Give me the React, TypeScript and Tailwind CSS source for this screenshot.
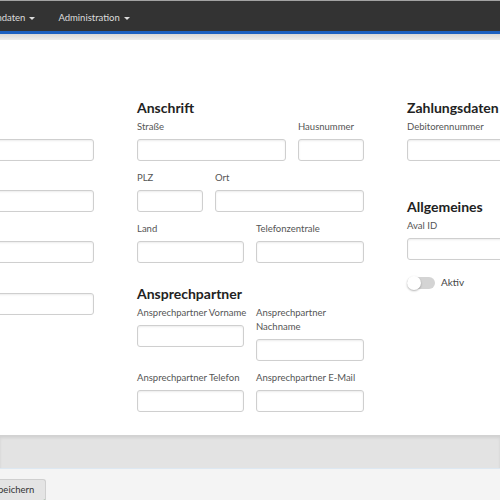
import React from "react";

function Field({ label, w, className = "" }: { label: React.ReactNode; w: string; className?: string }) {
  return (
    <div className={"flex flex-col " + className}>
      <label className="text-[9.5px] leading-[14px] text-[#555] mb-[5px] whitespace-nowrap">{label}</label>
      <input
        className={"h-[22px] rounded-[3px] border border-[#cfcfcf] bg-white shadow-[inset_0_1px_2px_rgba(0,0,0,0.08)] " + w}
      />
    </div>
  );
}

function Heading({ children, className = "" }: { children: React.ReactNode; className?: string }) {
  return <h2 className={"text-[14px] leading-[16px] font-bold text-[#222] mb-[4px] " + className}>{children}</h2>;
}

export default function App() {
  return (
    <div className="w-[500px] h-[500px] overflow-hidden bg-[#f4f4f4] font-['Lato','Liberation_Sans',sans-serif]">
      {/* Top bar */}
      <div className="h-px bg-[#a3a3a3]" />
      <nav className="h-[30px] bg-[#333333] flex items-center pt-[5px] text-[9.5px] text-[#dddddd]">
        <div className="flex items-center gap-[4px] ml-[-27px]">
          <span>Stammdaten</span>
          <span className="border-x-[3px] border-x-transparent border-t-[3px] border-t-[#dddddd]" />
        </div>
        <div className="flex items-center gap-[4px] ml-[23px]">
          <span>Administration</span>
          <span className="border-x-[3px] border-x-transparent border-t-[3px] border-t-[#dddddd]" />
        </div>
      </nav>
      <div className="h-[3px] bg-[#1b5fc0]" />
      <div className="h-[6px] bg-gradient-to-b from-[#d6d6d6] to-[#ededed]" />

      {/* Form card */}
      <main className="h-[395px] bg-white pt-[60px]">
        <div className="flex gap-[43px] ml-[-133px]">
          {/* Column 1 (cut off) */}
          <div className="w-[227px] shrink-0">
            <Heading>Firma</Heading>
            <Field label="Name" w="w-[227px]" className="mb-[10px]" />
            <Field label="Name 2" w="w-[227px]" className="mb-[10px]" />
            <Field label="Kundennummer" w="w-[227px]" className="mb-[11px]" />
            <Field label="Steuernummer" w="w-[227px]" />
          </div>

          {/* Column 2 */}
          <div className="w-[227px] shrink-0">
            <Heading>Anschrift</Heading>
            <div className="flex gap-[12px] mb-[10px]">
              <Field label="Straße" w="w-[149px]" />
              <Field label="Hausnummer" w="w-[66px]" />
            </div>
            <div className="flex gap-[12px] mb-[10px]">
              <Field label="PLZ" w="w-[66px]" />
              <Field label="Ort" w="w-[149px]" />
            </div>
            <div className="flex gap-[12px]">
              <Field label="Land" w="w-[107px]" />
              <Field label="Telefonzentrale" w="w-[108px]" />
            </div>
            <Heading className="mt-[23px]">Ansprechpartner</Heading>
            <div className="flex gap-[12px] items-start mb-[10px]">
              <Field label="Ansprechpartner Vorname" w="w-[107px]" className="w-[107px]" />
              <Field label={<>Ansprechpartner<br />Nachname</>} w="w-[108px]" className="w-[108px]" />
            </div>
            <div className="flex gap-[12px] items-start">
              <Field label="Ansprechpartner Telefon" w="w-[107px]" className="w-[107px]" />
              <Field label="Ansprechpartner E-Mail" w="w-[108px]" className="w-[108px]" />
            </div>
          </div>

          {/* Column 3 */}
          <div className="w-[227px] shrink-0">
            <Heading>Zahlungsdaten</Heading>
            <Field label="Debitorennummer" w="w-[227px]" />
            <Heading className="mt-[38px]">Allgemeines</Heading>
            <Field label="Aval ID" w="w-[227px]" />
            <div className="flex items-center gap-[6px] mt-[15px]">
              <span className="relative w-[28px] h-[12px] rounded-full bg-[#d4d4d4]">
                <span className="absolute left-0 top-[-1px] w-[14px] h-[14px] rounded-full bg-white shadow-[0_1px_2px_rgba(0,0,0,0.3)]" />
              </span>
              <span className="text-[10px] text-[#444]">Aktiv</span>
            </div>
          </div>
        </div>
      </main>

      {/* Footer */}
      <div className="h-[33px] bg-[#e3e3e3] shadow-[inset_0_3px_3px_rgba(0,0,0,0.08)]" />
      <div className="border-t border-[#dde8f2] pt-[6px]">
        <button className="ml-[-19px] h-[23px] px-[11px] rounded-[3px] bg-[#e4e4e4] border border-[#cfcfcf] border-b-2 border-b-[#3a8a3f] text-[9.5px] text-[#333]">
          Speichern
        </button>
      </div>
    </div>
  );
}
